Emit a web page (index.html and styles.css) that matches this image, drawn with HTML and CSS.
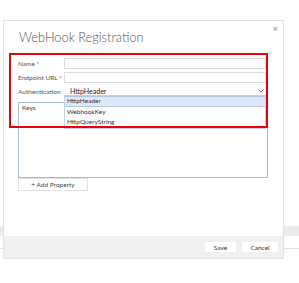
FILE: index.html
```html
<!DOCTYPE html>
<html lang="en">
<head>
    <meta charset="UTF-8">
    <title>WebHook Registration</title>
    <link rel="stylesheet" href="styles.css">
</head>
<body>
    <!-- page behind the modal -->
    <div class="backdrop">
        <div class="backdrop-band"></div>
        <div class="backdrop-line"></div>
    </div>

    <div class="dialog">
        <div class="dialog-close">&#215;</div>
        <div class="dialog-title">WebHook Registration</div>

        <div class="dialog-body">
            <div class="field-row">
                <div class="field-label">Name <span class="req">*</span></div>
                <div class="field-input"></div>
            </div>
            <div class="field-row">
                <div class="field-label">Endpoint URL <span class="req">*</span></div>
                <div class="field-input"></div>
            </div>
            <div class="field-row">
                <div class="field-label">Authentication</div>
                <div class="field-select">
                    <span class="select-value">HttpHeader</span>
                    <svg class="select-chevron" width="6" height="4" viewBox="0 0 6 4"><path d="M0.5 0.5 L3 3 L5.5 0.5" fill="none" stroke="#777" stroke-width="0.9"/></svg>
                    <div class="select-list">
                        <div class="select-option active">HttpHeader</div>
                        <div class="select-option">WebhookKey</div>
                        <div class="select-option">HttpQueryString</div>
                    </div>
                </div>
            </div>

            <div class="keys-table">
                <div class="keys-head">
                    <div class="keys-col">Keys</div>
                    <div class="keys-col"></div>
                </div>
            </div>
            <button class="add-btn">+ Add Property</button>
        </div>

        <div class="dialog-footer">
            <button class="foot-btn save">Save</button>
            <button class="foot-btn cancel">Cancel</button>
        </div>
    </div>

    <!-- highlight annotation -->
    <div class="highlight"></div>
</body>
</html>
```

FILE: styles.css
```css
* { box-sizing: border-box; }
body { margin: 0; background: #fff; font-family: "Segoe UI", Lato, "Noto Sans", sans-serif; color: #444; }

.backdrop { height: 283px; padding-top: 226px; }
.backdrop-band { height: 10px; background: #ececec; }
.backdrop-line { height: 1px; margin-top: 12px; background: #e2e2e2; }

.dialog { position: absolute; left: 3px; top: 20px; width: 281px; height: 239px; background: #fff; border: 1px solid #e4e4e4; display: flex; flex-direction: column; }
.dialog-close { position: absolute; right: 5px; top: 2px; font-size: 9px; color: #888; }
.dialog-title { padding: 8px 0 0 15px; height: 35px; font-size: 12.8px; line-height: 17px; color: #555; font-weight: 300; }

.dialog-body { padding: 0 15px 0 14px; }
.field-row { display: flex; align-items: center; height: 14px; }
.field-label { width: 46px; font-size: 6.5px; color: #555; white-space: nowrap; }
.req { color: #e0262b; }
.field-input { flex: 1; height: 11px; border: 1px solid #ddd; margin-right: 2px; }
.field-select { flex: 1; height: 10px; position: relative; border-bottom: 1px solid #ddd; margin-right: 2px; display: flex; align-items: center; padding-left: 6px; }
.select-value { font-size: 7px; color: #222; flex: 1; }
.select-chevron { margin-right: 2px; }
.select-list { position: absolute; left: 0; right: 0; top: 9px; background: #fff; border: 1px solid #c8d2dc; z-index: 2; }
.select-option { height: 10.5px; line-height: 10px; font-size: 6.5px; color: #333; padding-left: 2px; }
.select-option.active { background: #dde9fa; border-top: 1px solid #b6c8e0; border-bottom: 1px solid #b6c8e0; line-height: 8.5px; }

.keys-table { margin-top: 4px; height: 76px; border: 1px solid #a9bccd; }
.keys-head { display: flex; height: 12px; }
.keys-col { width: 46px; font-size: 6.5px; padding: 1px 0 0 3px; color: #444; border-right: 1px solid #ddd; }
.keys-col:last-child { flex: 1; border-right: none; }

.add-btn { display: block; margin-top: 0; width: 70px; height: 13px; padding: 0; background: #fff; border: 1px solid #e2e2e2; font-family: inherit; font-size: 6.5px; color: #444; }

.dialog-footer { margin-top: auto; height: 22px; background: #f0f0f0; display: flex; justify-content: flex-end; align-items: center; gap: 6px; padding-right: 5px; }
.foot-btn { height: 10px; padding: 0; background: #fff; border: none; font-family: inherit; font-size: 6.5px; color: #333; }
.foot-btn.save { width: 31px; }
.foot-btn.cancel { width: 36px; }

.highlight { position: absolute; left: 9px; top: 53px; width: 259px; height: 75px; border: 2px solid #e8000b; z-index: 3; }
```
